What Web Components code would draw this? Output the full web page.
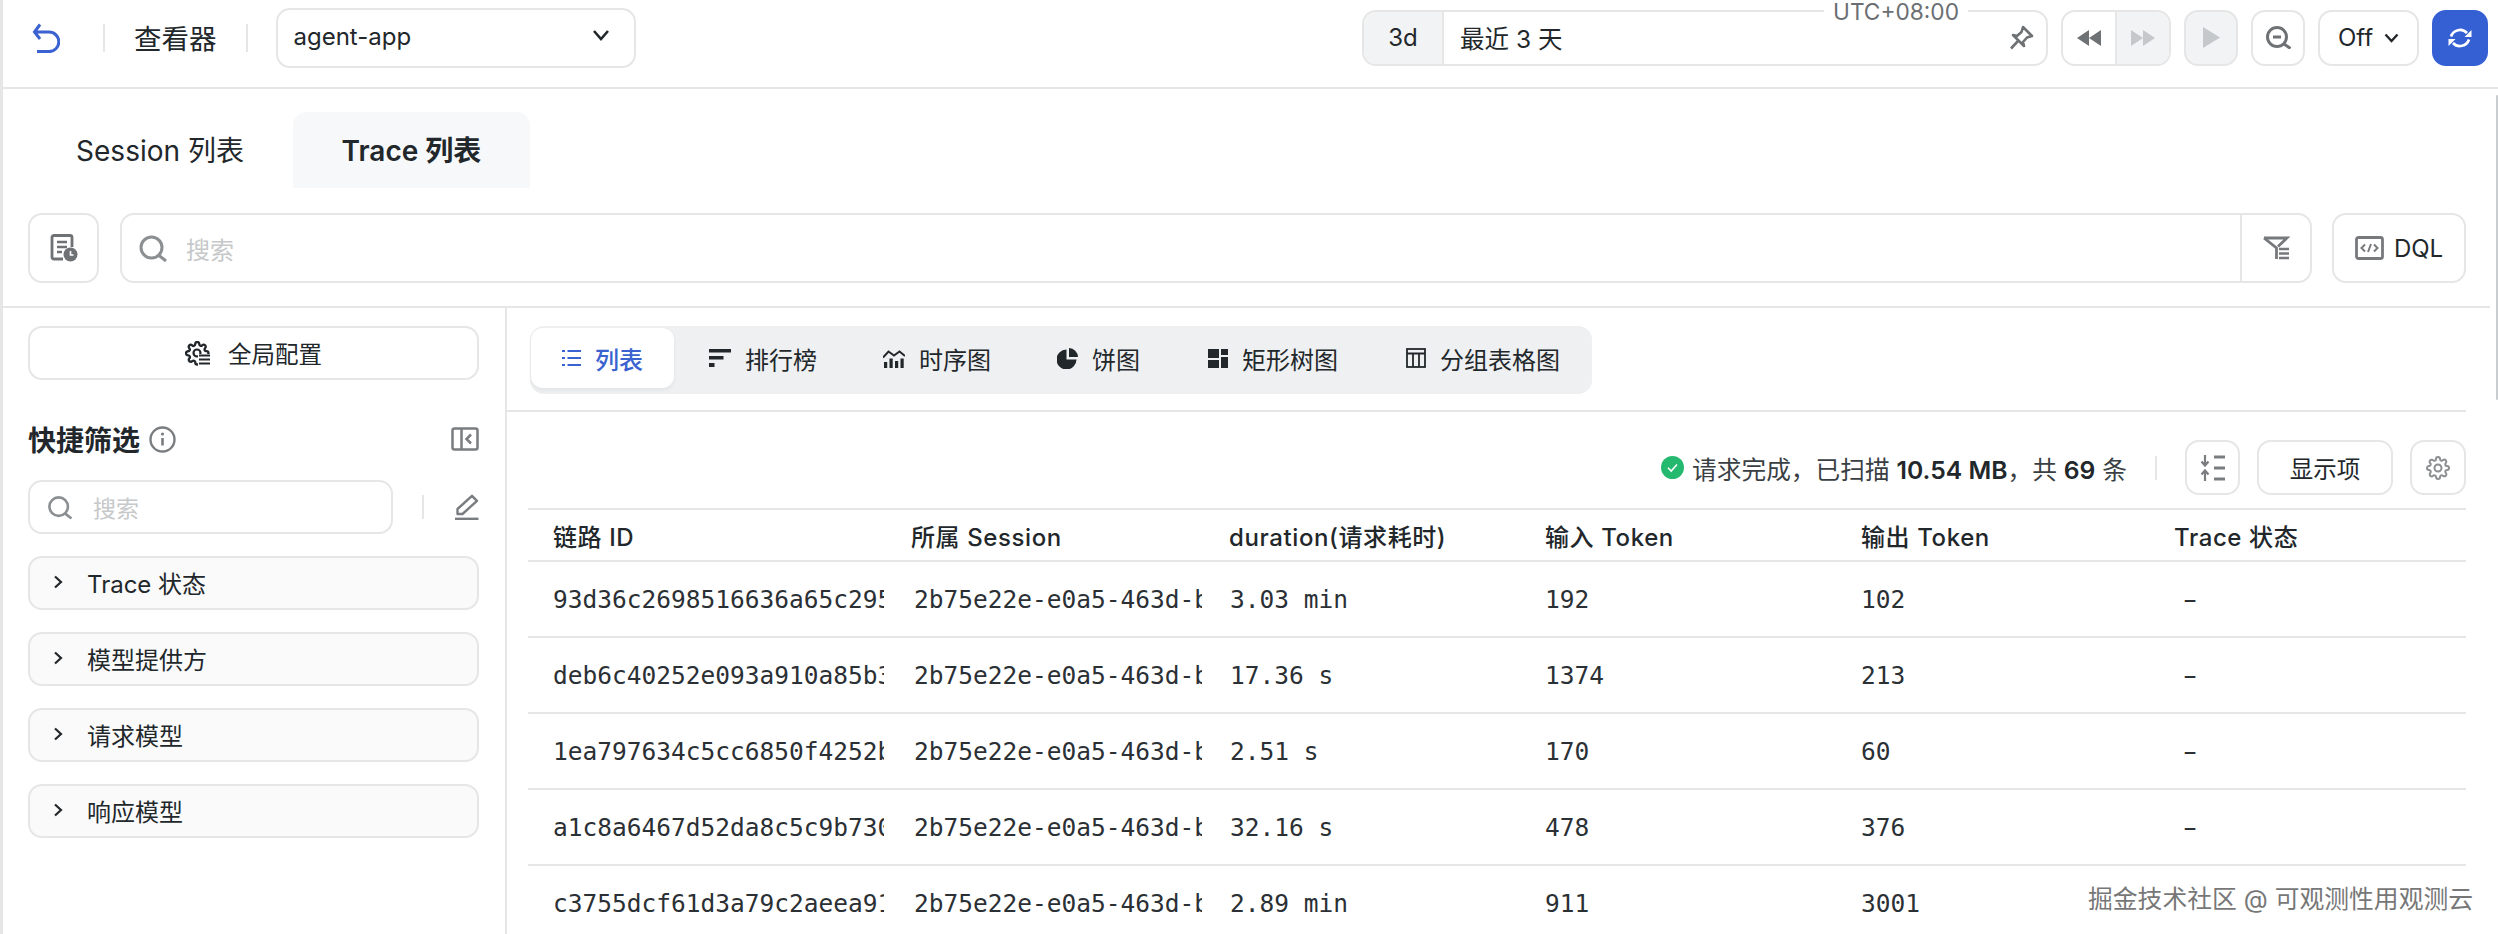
<!DOCTYPE html>
<html lang="zh">
<head>
<meta charset="utf-8">
<title>查看器</title>
<style>
html, body { margin: 0; padding: 0; background: #fff; }
body {
    font-family: Inter, "Noto Sans CJK SC", sans-serif;
    font-size: 24px;
    color: #22272b;
    width: 2498px;
    height: 934px;
    overflow: hidden;
}
</style>
</head>
<body>
<x-app></x-app>
<script>
"use strict"
const GEAR = 'M19.4 15a1.65 1.65 0 0 0 .33 1.82l.06.06a2 2 0 0 1 0 2.83 2 2 0 0 1-2.83 0l-.06-.06a1.65 1.65 0 0 0-1.82-.33 1.65 1.65 0 0 0-1 1.51V21a2 2 0 0 1-2 2 2 2 0 0 1-2-2v-.09A1.65 1.65 0 0 0 9 19.4a1.65 1.65 0 0 0-1.82.33l-.06.06a2 2 0 0 1-2.83 0 2 2 0 0 1 0-2.83l.06-.06a1.65 1.65 0 0 0 .33-1.82 1.65 1.65 0 0 0-1.51-1H3a2 2 0 0 1-2-2 2 2 0 0 1 2-2h.09A1.65 1.65 0 0 0 4.6 9a1.65 1.65 0 0 0-.33-1.82l-.06-.06a2 2 0 0 1 0-2.83 2 2 0 0 1 2.83 0l.06.06a1.65 1.65 0 0 0 1.82.33H9a1.65 1.65 0 0 0 1-1.51V3a2 2 0 0 1 2-2 2 2 0 0 1 2 2v.09a1.65 1.65 0 0 0 1 1.51 1.65 1.65 0 0 0 1.82-.33l.06-.06a2 2 0 0 1 2.83 0 2 2 0 0 1 0 2.83l-.06.06a1.65 1.65 0 0 0-.33 1.82V9a1.65 1.65 0 0 0 1.51 1H21a2 2 0 0 1 2 2 2 2 0 0 1-2 2h-.09a1.65 1.65 0 0 0-1.51 1z';

// w, h, inner svg. stroke is on by default, use fill="currentColor" stroke="none" for solid parts
const ICONS = {
    back: [28, 30, '<path stroke-width="3" d="M8 1.500L2.500 9L8 16M2.500 9H17a9.800 9.800 0 0 1 0 19.600H5"/>'],
    chev: [18, 12, '<path stroke-width="2.600" d="M2 2L9 10L16 2"/>'],
    chevs: [15, 10, '<path stroke-width="2.400" d="M1.500 1.500L7.500 8L13.500 1.500"/>'],
    right: [10, 14, '<path stroke-width="2.200" d="M2 1.500L8 7L2 12.500"/>'],
    doc: [28, 28, '<path stroke-width="2.800" d="M13 25H4a2 2 0 0 1-2-2V3.500a2 2 0 0 1 2-2h16a2 2 0 0 1 2 2V13"/><path stroke-width="2.600" d="M7 8h10M7 13h10M7 18h5"/><circle cx="20.500" cy="20.500" r="7" fill="currentColor" stroke="none"/><path stroke="#fff" stroke-width="1.600" d="M20.500 17v4h3"/>'],
    search: [28, 27, '<circle cx="12.500" cy="12.500" r="10.500" stroke-width="3"/><path stroke-width="3" d="M20 20.500L27 26"/>'],
    filter: [28, 24, '<path stroke-width="2.800" d="M2 2H25L16 10.500M14.500 23V12L2 2"/><path stroke-width="2.600" d="M17 13h10M17 17.500h10M17 22h10"/>'],
    code: [29, 24, '<rect x="1.500" y="1.500" width="26" height="21" rx="2" stroke-width="2.800"/><path stroke-width="2" d="M10 8.500L6.500 12L10 15.500M19 8.500L22.500 12L19 15.500M16 8L13 16"/>'],
    pin: [26, 26, '<path stroke-width="2.600" stroke-linejoin="round" d="M15 2L24 11L19 12.500L15 17L16 21L5 10L9 11L13.500 7Z"/><path stroke-width="2.600" d="M10 16L3 23.500"/>'],
    rew: [24, 16, '<path fill="currentColor" stroke="none" d="M12 0L0 8L12 16ZM24 0L12 8L24 16Z"/>'],
    fwd: [24, 16, '<path fill="currentColor" stroke="none" d="M0 0L12 8L0 16ZM12 0L24 8L12 16Z"/>'],
    play: [17, 21, '<path fill="currentColor" stroke="none" d="M0 0L17 10.500L0 21Z"/>'],
    zoomout: [25, 23, '<circle cx="11" cy="11" r="9.500" stroke-width="3"/><path stroke-width="3" d="M18 18L24.500 22.500M7 11h8"/>'],
    refresh: [24, 22, '<path stroke-width="2.600" d="M3 9.500A9.500 9.500 0 0 1 19 6M21 12.500A9.500 9.500 0 0 1 5 16"/><path fill="currentColor" stroke="none" d="M23.500 3V10H16.500ZM.5 19V12H7.500Z"/>'],
    cfg: [25, 25, '<path stroke-width="2.300" transform="scale(1.02)" d="' + GEAR + '"/><circle cx="12" cy="12" r="3.500" stroke-width="2.200"/><rect x="13" y="13" width="12" height="12" fill="#fff" stroke="none"/><path stroke-width="1.800" d="M14 14.500h11M14 18.500h11M14 22.500h11"/>'],
    info: [27, 27, '<circle cx="13.500" cy="13.500" r="12" stroke-width="2.400"/><path stroke-width="2.600" d="M13.500 12v7.500"/><circle cx="13.500" cy="8" r="1.600" fill="currentColor" stroke="none"/>'],
    panel: [28, 24, '<rect x="1.500" y="1.500" width="25" height="21" rx="2" stroke-width="2.500"/><path stroke-width="2.500" d="M10.500 1.500v21M20 7.500L15.500 12L20 16.500"/>'],
    edit: [25, 26, '<path stroke-width="2.400" stroke-linejoin="round" d="M18 1.800L23 6.800L8.500 20H3.500V15Z"/><path stroke-width="2.400" d="M1 24.800H24.500"/>'],
    sort: [26, 30, '<path stroke-width="2.200" d="M5 2V12M1.500 8.500L5 12.500L8.500 8.500M5 28V18M1.500 21.500L5 17.500L8.500 21.500"/><path stroke-width="2.800" d="M14 4h11M14 15h11M14 26h11"/>'],
    gear: [24, 26, '<path stroke-width="2" transform="translate(0 1)" d="' + GEAR + '"/><circle cx="12" cy="13" r="3.500" stroke-width="2"/>'],
    ok: [23, 23, '<circle cx="11.500" cy="11.500" r="11.500" fill="#25b96f" stroke="none"/><path stroke="#fff" stroke-width="1.600" d="M7 11.800L10.200 15L16 8.500"/>'],
    list: [19, 18, '<path stroke-width="2.200" d="M5.500 2H19M5.500 9H19M5.500 16H19M0 2H3M0 9H3M0 16H3"/>'],
    rank: [22, 18, '<path fill="currentColor" stroke="none" d="M0 0H22V3.500H0ZM0 7H14.500V10.500H0ZM0 14H5.500V18H0Z"/>'],
    series: [22, 19, '<path stroke-width="2" d="M0 8.500L5.500 2.500L11 6.500L16.500 2.500L22 7"/><path fill="currentColor" stroke="none" d="M1 13h3.200v6H1ZM6.500 9.500h3.200V19H6.500ZM12 12h3.200v7H12ZM17.500 9.500h3.200V19h-3.200Z"/>'],
    pie: [21, 21, '<path fill="currentColor" stroke="none" d="M9.500 1.500V11.500H19.500A10 10 0 1 1 9.500 1.500ZM12 0A9.500 9.500 0 0 1 21 9H12Z"/>'],
    tree: [20, 19, '<path fill="currentColor" stroke="none" d="M0 0H11V9H0ZM0 11H11V19H0ZM13 0H20V6H13ZM13 8H20V19H13Z"/>'],
    table: [20, 20, '<rect x="1" y="1" width="18" height="18" stroke-width="1.800"/><path stroke-width="1.800" d="M1 5.500H19M7 5.500V19M13 5.500V19"/>']
};

class XIcon extends HTMLElement {
    constructor() {
        super();
        const shadow = this.attachShadow({ mode: 'open' });
        const [w, h, inner] = ICONS[this.getAttribute('name')];
        shadow.innerHTML = `<style>:host{display:inline-flex;flex:none;line-height:0}</style>
<svg width="${w}" height="${h}" viewBox="0 0 ${w} ${h}" fill="none" stroke="currentColor">${inner}</svg>`;
    }
}
customElements.define('x-icon', XIcon);

// bordered box used for nearly every button in this screen
class XBtn extends HTMLElement {
    constructor() {
        super();
        this.attachShadow({ mode: 'open' }).innerHTML = `<style>
:host {
    display: inline-flex;
    align-items: center;
    justify-content: center;
    flex: none;
    box-sizing: border-box;
    border: 2px solid #e6e6e6;
    border-radius: 14px;
    background: #fff;
    color: #6f7275;
}
:host([disabled]) { background: #f2f3f4; color: #c4c8cb; }
:host([primary]) { background: #3560d4; border-color: #3560d4; color: #fff; }
</style><slot></slot>`;
    }
}
customElements.define('x-btn', XBtn);

class XTimePicker extends HTMLElement {
    constructor() {
        super();
        this.attachShadow({ mode: 'open' }).innerHTML = `<style>
:host {
    display: flex;
    flex: none;
    position: relative;
    box-sizing: border-box;
    width: 686px;
    height: 56px;
    border: 2px solid #e6e6e6;
    border-radius: 14px;
    align-items: center;
}
.q {
    width: 80px;
    height: 100%;
    box-sizing: border-box;
    background: #f2f3f4;
    border-right: 2px solid #e6e6e6;
    border-radius: 12px 0 0 12px;
    display: flex;
    align-items: center;
    justify-content: center;
    font-size: 24px;
}
.v { margin-left: 16px; flex: 1; font-size: 24.500px; }
x-icon { color: #6f7275; margin-right: 12px; }
.tz {
    position: absolute;
    left: 460px;
    top: -10px;
    padding: 0 9px;
    background: #fff;
    color: #6b6f73;
    font-size: 22.700px;
    line-height: 20px;
}
</style>
<div class="q">3d</div>
<div class="v">最近 3 天</div>
<x-icon name="pin"></x-icon>
<div class="tz">UTC+08:00</div>`;
    }
}
customElements.define('x-time-picker', XTimePicker);

class XTopbar extends HTMLElement {
    constructor() {
        super();
        this.attachShadow({ mode: 'open' }).innerHTML = `<style>
:host {
    display: flex;
    align-items: center;
    box-sizing: border-box;
    height: 89px;
    padding: 0 10px 12px 29px;
    border-bottom: 2px solid #e6e6e6;
}
.back { color: #3a62d0; }
.sep { width: 2px; height: 28px; background: #e6e6e6; }
.title { font-size: 27.500px; margin: -2px 29px 0 29px; }
.select {
    display: flex;
    align-items: center;
    justify-content: space-between;
    box-sizing: border-box;
    width: 360px;
    height: 60px;
    margin-left: 28px;
    padding: 0 24px 2px 16px;
    border: 2px solid #e6e6e6;
    border-radius: 14px;
    font-size: 24px;
}
.select x-icon { margin-top: -3px; }
.right { display: flex; align-items: center; gap: 13px; margin-left: auto; }
.pair { display: flex; width: 110px; height: 56px; box-sizing: border-box; border: 2px solid #e6e6e6; border-radius: 14px; overflow: hidden; }
.pair div { flex: 1; display: flex; align-items: center; justify-content: center; }
.pair .a { color: #6f7275; border-right: 2px solid #e6e6e6; }
.pair .b { color: #c4c8cb; background: #f2f3f4; }
x-btn { height: 56px; width: 54px; }
.off { width: 101px; gap: 11px; font-size: 24px; color: #22272b; }
.go { width: 56px; }
</style>
<x-icon class="back" name="back"></x-icon>
<div class="sep" style="margin-left:43px"></div>
<div class="title">查看器</div>
<div class="sep"></div>
<div class="select">agent-app<x-icon name="chev"></x-icon></div>
<div class="right">
    <x-time-picker></x-time-picker>
    <div class="pair"><div class="a"><x-icon name="rew"></x-icon></div><div class="b"><x-icon name="fwd"></x-icon></div></div>
    <x-btn disabled><x-icon name="play"></x-icon></x-btn>
    <x-btn><x-icon name="zoomout"></x-icon></x-btn>
    <x-btn class="off">Off<x-icon name="chevs"></x-icon></x-btn>
    <x-btn class="go" primary><x-icon name="refresh"></x-icon></x-btn>
</div>`;
    }
}
customElements.define('x-topbar', XTopbar);

class XListTabs extends HTMLElement {
    constructor() {
        super();
        this.attachShadow({ mode: 'open' }).innerHTML = `<style>
:host { display: flex; padding: 23px 0 0 26px; height: 76px; font-size: 28px; }
div { display: flex; align-items: center; justify-content: center; height: 76px; padding-bottom: 3px; box-sizing: border-box; }
.s { width: 264px; padding-right: 2px; }
.t { width: 237px; background: #f6f8f9; border-radius: 14px 14px 0 0; font-weight: 600; }
</style>
<div class="s">Session 列表</div>
<div class="t">Trace 列表</div>`;
    }
}
customElements.define('x-list-tabs', XListTabs);

class XSearchBar extends HTMLElement {
    constructor() {
        super();
        this.attachShadow({ mode: 'open' }).innerHTML = `<style>
:host {
    display: flex;
    box-sizing: border-box;
    height: 95px;
    margin-top: 25px;
    padding: 0 8px 25px 25px;
    border-bottom: 2px solid #e6e6e6;
    width: 2487px;
}
x-btn { height: 70px; width: 71px; }
.input {
    flex: none;
    width: 2192px;
    margin: 0 20px 0 21px;
    display: flex;
    align-items: center;
    box-sizing: border-box;
    height: 70px;
    border: 2px solid #e6e6e6;
    border-radius: 14px;
    color: #8c8f92;
}
.input > x-icon { margin-left: 17px; }
.ph { flex: 1; margin-left: 19px; color: #c6c8ca; font-size: 24px; }
.f { width: 70px; height: 100%; box-sizing: border-box; border-left: 2px solid #e6e6e6; display: flex; align-items: center; justify-content: center; color: #77797c; }
.dql { width: 134px; gap: 10px; color: #77797c; }
.dql span { font-size: 24px; }
</style>
<x-btn><x-icon name="doc"></x-icon></x-btn>
<div class="input">
    <x-icon name="search"></x-icon>
    <div class="ph">搜索</div>
    <div class="f"><x-icon name="filter"></x-icon></div>
</div>
<x-btn class="dql"><x-icon name="code"></x-icon><span style="color:#22272b">DQL</span></x-btn>`;
    }
}
customElements.define('x-search-bar', XSearchBar);

class XFilterGroup extends HTMLElement {
    constructor() {
        super();
        this.attachShadow({ mode: 'open' }).innerHTML = `<style>
:host {
    display: flex;
    align-items: center;
    box-sizing: border-box;
    height: 54px;
    padding: 0 0 2px 23px;
    gap: 24px;
    background: #fafafa;
    border: 2px solid #e6e6e6;
    border-radius: 14px;
    font-size: 24px;
}
</style><x-icon name="right"></x-icon><slot></slot>`;
    }
}
customElements.define('x-filter-group', XFilterGroup);

class XSidebar extends HTMLElement {
    constructor() {
        super();
        this.attachShadow({ mode: 'open' }).innerHTML = `<style>
:host {
    display: flex;
    flex-direction: column;
    flex: none;
    box-sizing: border-box;
    width: 504px;
    padding: 18px 26px 0 25px;
    border-right: 2px solid #e6e6e6;
}
.cfg { height: 54px; gap: 18px; color: #22272b; font-size: 23.500px; }
.head { display: flex; align-items: center; height: 28px; margin-top: 45px; }
.head b { font-size: 28px; font-weight: 600; }
.head .i { margin-left: 9px; color: #7a7d80; }
.head .p { margin-left: auto; color: #7a7d80; }
.sr { display: flex; align-items: center; margin-top: 27px; }
.box { display: flex; align-items: center; box-sizing: border-box; width: 365px; height: 54px; padding-left: 18px; border: 2px solid #e6e6e6; border-radius: 14px; color: #8c8f92; }
.box x-icon { transform: scale(.88); margin-left: -2px; }
.box span { color: #c6c8ca; margin-left: 19px; font-size: 23px; }
.sep { width: 2px; height: 24px; background: #e6e6e6; margin-left: 29px; }
.e { margin-left: auto; color: #7a7d80; }
.groups { display: flex; flex-direction: column; gap: 22px; margin-top: 22px; }
</style>
<x-btn class="cfg"><x-icon name="cfg"></x-icon><span style="color:#22272b">全局配置</span></x-btn>
<div class="head"><b>快捷筛选</b><x-icon class="i" name="info"></x-icon><x-icon class="p" name="panel"></x-icon></div>
<div class="sr"><div class="box"><x-icon name="search"></x-icon><span>搜索</span></div><div class="sep"></div><x-icon class="e" name="edit"></x-icon></div>
<div class="groups">
    <x-filter-group>Trace 状态</x-filter-group>
    <x-filter-group>模型提供方</x-filter-group>
    <x-filter-group>请求模型</x-filter-group>
    <x-filter-group>响应模型</x-filter-group>
</div>`;
    }
}
customElements.define('x-sidebar', XSidebar);

class XVizTabs extends HTMLElement {
    constructor() {
        super();
        const items = [['list', '列表'], ['rank', '排行榜'], ['series', '时序图'], ['pie', '饼图'], ['tree', '矩形树图'], ['table', '分组表格图']];
        this.attachShadow({ mode: 'open' }).innerHTML = `<style>
:host {
    display: inline-flex;
    align-self: flex-start;
    align-items: center;
    gap: 4px;
    box-sizing: border-box;
    height: 68px;
    margin-left: 23px;
    padding: 0 1px 4px 1px;
    background: #eef0f1;
    border-radius: 14px;
}
div { display: flex; align-items: center; gap: 14px; height: 60px; padding: 0 31px; font-size: 24px; color: #22272b; }
div.on { background: #fff; color: #3a62d0; border-radius: 12px; box-shadow: 0 2px 4px rgba(0,0,0,.06); font-weight: 500; }
div:nth-child(6), div:nth-child(7) { margin-left: 2px; }
</style>` + items.map((it, i) => `<div class="${i ? '' : 'on'}"><x-icon name="${it[0]}"></x-icon>${it[1]}</div>`).join('');
    }
}
customElements.define('x-viz-tabs', XVizTabs);

class XStatusBar extends HTMLElement {
    constructor() {
        super();
        this.attachShadow({ mode: 'open' }).innerHTML = `<style>
:host {
    display: flex;
    align-items: center;
    justify-content: flex-end;
    height: 55px;
    margin-top: 28px;
    color: #3a3f44;
    font-size: 24.700px;
}
b { font-weight: 600; color: #22272b; }
.t { margin-left: 8px; white-space: pre; }
.sep { width: 2px; height: 24px; background: #e6e6e6; margin: 0 28px 0 28px; }
x-btn { height: 55px; }
.sort { width: 55px; color: #7a7d80; }
.show { width: 136px; margin: 0 17px; color: #22272b; font-size: 23.500px; }
.gear { width: 56px; color: #8c8f92; }
</style>
<x-icon name="ok"></x-icon>
<div class="t">请求完成，已扫描 <b>10.54 MB</b>，共 <b>69</b> 条</div>
<div class="sep"></div>
<x-btn class="sort"><x-icon name="sort"></x-icon></x-btn>
<x-btn class="show">显示项</x-btn>
<x-btn class="gear"><x-icon name="gear"></x-icon></x-btn>`;
    }
}
customElements.define('x-status-bar', XStatusBar);

class XTable extends HTMLElement {
    constructor() {
        super();
        const head = ['链路 ID', '所属 Session', 'duration(请求耗时)', '输入 Token', '输出 Token', 'Trace 状态'];
        const rows = [
            ['93d36c2698516636a65c295', '2b75e22e-e0a5-463d-b', '3.03 min', '192', '102', '-'],
            ['deb6c40252e093a910a85b3', '2b75e22e-e0a5-463d-b', '17.36 s', '1374', '213', '-'],
            ['1ea797634c5cc6850f4252b', '2b75e22e-e0a5-463d-b', '2.51 s', '170', '60', '-'],
            ['a1c8a6467d52da8c5c9b730', '2b75e22e-e0a5-463d-b', '32.16 s', '478', '376', '-'],
            ['c3755dcf61d3a79c2aeea91', '2b75e22e-e0a5-463d-b', '2.89 min', '911', '3001', '']
        ];
        const row = (cells, cls) => `<div class="row ${cls}">` + cells.map(c => `<div class="c">${c}</div>`).join('') + '</div>';
        this.attachShadow({ mode: 'open' }).innerHTML = `<style>
:host { display: block; margin: 13px 0 0 21px; border-top: 2px solid #e6e6e6; }
.row {
    display: grid;
    grid-template-columns: 358px 318px 316px 316px 313px 1fr;
    align-items: center;
    box-sizing: border-box;
    height: 76px;
    border-bottom: 2px solid #e6e6e6;
}
.head { height: 52px; font-size: 24px; font-weight: 500; letter-spacing: .6px; }
.body { font-family: "DejaVu Sans Mono", "Noto Sans CJK SC", monospace; font-size: 24.500px; color: #2b3035; }
.c { padding-left: 25px; overflow: hidden; white-space: nowrap; clip-path: inset(0 2px 0 0); }
.body .c:nth-child(2) { padding-left: 28px; }
.body .c:nth-child(3) { padding-left: 26px; }
/* the dash is wider in the original mono font */
.body .c:nth-child(6) { transform: scaleX(1.7); transform-origin: 20px 0; }
</style>` + row(head, 'head') + rows.map(r => row(r, 'body')).join('');
    }
}
customElements.define('x-table', XTable);

class XApp extends HTMLElement {
    constructor() {
        super();
        this.attachShadow({ mode: 'open' }).innerHTML = `<style>
:host {
    display: flex;
    flex-direction: column;
    position: relative;
    box-sizing: border-box;
    width: 2498px;
    height: 934px;
    overflow: hidden;
    border-left: 3px solid #e6e6e6;
}
.split { display: flex; flex: 1; min-height: 0; }
.main { flex: 1; min-width: 0; display: flex; flex-direction: column; padding: 18px 32px 0 0; }
.main > * { flex: none; }
.rule { height: 2px; background: #e6e6e6; margin-top: 16px; }
/* overlay scrollbar */
.bar { position: absolute; right: 0; top: 95px; width: 2px; height: 305px; background: #c9cdcf; border-radius: 2px; }
.mark {
    position: absolute;
    left: 2085px;
    top: 879px;
    color: #777;
    font-size: 24.800px;
    text-shadow: 1px 1px 0 rgba(255,255,255,.9), -1px -1px 0 rgba(255,255,255,.6);
}
</style>
<x-topbar></x-topbar>
<x-list-tabs></x-list-tabs>
<x-search-bar></x-search-bar>
<div class="split">
    <x-sidebar></x-sidebar>
    <div class="main">
        <x-viz-tabs></x-viz-tabs>
        <div class="rule"></div>
        <x-status-bar></x-status-bar>
        <x-table></x-table>
    </div>
</div>
<div class="bar"></div>
<div class="mark">掘金技术社区 @ 可观测性用观测云</div>`;
    }
}
customElements.define('x-app', XApp);
</script>
</body>
</html>
